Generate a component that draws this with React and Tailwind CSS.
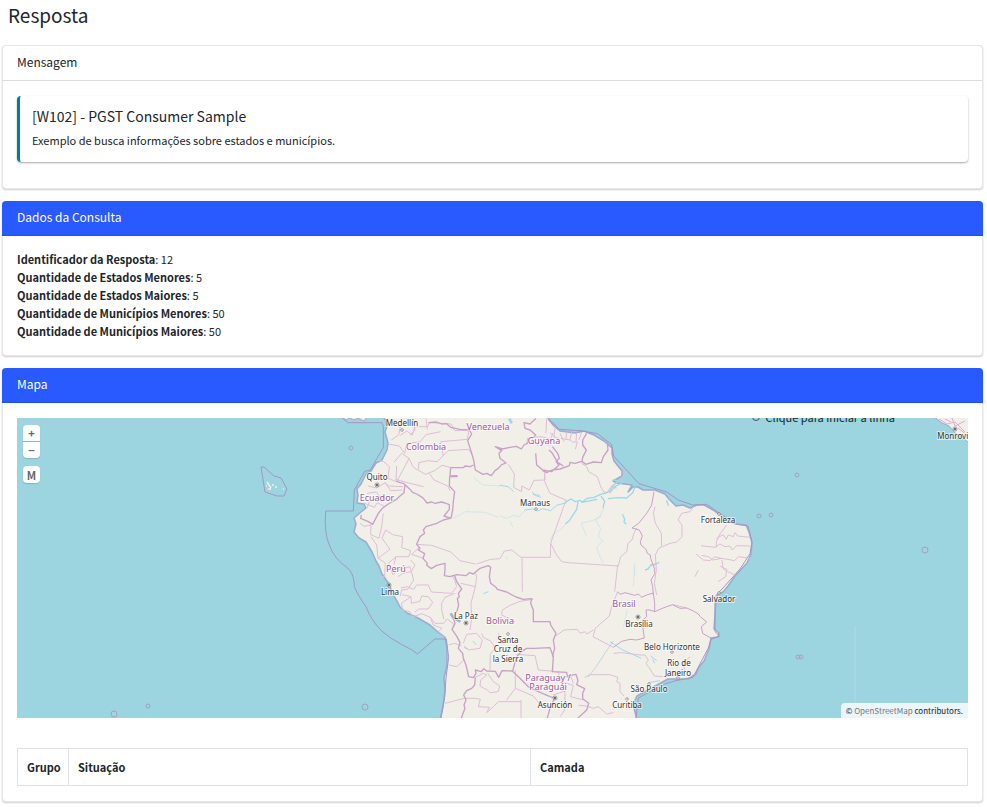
import { useState } from 'react';
import clsx from 'clsx';

// --- Data ---
const consulta = [
  { label: 'Identificador da Resposta', value: 12 },
  { label: 'Quantidade de Estados Menores', value: 5 },
  { label: 'Quantidade de Estados Maiores', value: 5 },
  { label: 'Quantidade de Municípios Menores', value: 50 },
  { label: 'Quantidade de Municípios Maiores', value: 50 },
];

const countries = [
  { x: 471, y: 12, name: 'Venezuela' },
  { x: 409, y: 32, name: 'Colombia' },
  { x: 527, y: 26, name: 'Guyana' },
  { x: 360, y: 83, name: 'Ecuador' },
  { x: 379, y: 154, name: 'Perú' },
  { x: 483, y: 206, name: 'Bolivia' },
  { x: 607, y: 189, name: 'Brasil' },
  { x: 531, y: 263, name: 'Paraguay /' },
  { x: 531, y: 272, name: 'Paraguái' },
];

const cities = [
  { x: 385, y: 8, name: 'Medellín', dot: [385, 12] },
  { x: 360, y: 62, name: 'Quito', dot: [360, 67], capital: true },
  { x: 518, y: 88, name: 'Manaus', dot: [519, 91] },
  { x: 701, y: 105, name: 'Fortaleza', dot: [702, 96] },
  { x: 373, y: 177, name: 'Lima', dot: [372, 167], capital: true },
  { x: 449, y: 201, name: 'La Paz', dot: [449, 205], capital: true },
  { x: 491, y: 225, name: 'Santa', dot: [491, 216] },
  { x: 491, y: 234, name: 'Cruz de' },
  { x: 491, y: 244, name: 'la Sierra' },
  { x: 702, y: 184, name: 'Salvador', dot: [702, 175] },
  { x: 622, y: 209, name: 'Brasília', dot: [621, 199], capital: true },
  { x: 655, y: 232, name: 'Belo Horizonte', dot: [655, 234] },
  { x: 662, y: 248, name: 'Rio de' },
  { x: 661, y: 258, name: 'Janeiro', dot: [661, 260] },
  { x: 632, y: 274, name: 'São Paulo', dot: [632, 266] },
  { x: 610, y: 290, name: 'Curitiba', dot: [610, 281] },
  { x: 538, y: 290, name: 'Asunción', dot: [538, 280], capital: true },
  { x: 938, y: 21, name: 'Monrovia', dot: [938, 11], capital: true },
];

const islands = [
  [334, 30, 2], [780, 57, 2], [742, 98, 2], [754, 97, 2], [908, 132, 3],
  [781, 239, 2], [784, 239, 2], [97, 296, 3], [131, 288, 2], [348, 289, 3],
];

// --- Helper Components ---
const Card = ({ title, primary = false, className = '', children }) => (
  <section className={clsx('rounded border border-gray-200 bg-white shadow-[0_1px_2px_rgba(0,0,0,0.2)]', className)}>
    <h2
      className={clsx(
        '-mx-px -mt-px rounded-t text-xs leading-8',
        primary
          ? 'h-[35px] border-b border-[#244fe5] bg-[#295aff] px-[15px] text-white'
          : 'h-9 border border-gray-200 border-b-[#dcdcdc] px-[14px]'
      )}
    >
      {title}
    </h2>
    {children}
  </section>
);

const MapDrawing = () => (
  <svg
    className="block h-full w-full"
    viewBox="0 0 951 300"
    preserveAspectRatio="xMidYMid slice"
    role="img"
    aria-label="Mapa da América do Sul"
    fill="none"
  >
    <rect width="951" height="300" fill="#9cd4df" />

    {/* land */}
    <path
      transform="translate(-17 -418)"
      fill="#f2efe9"
      stroke="#9dabce"
      strokeWidth="1.5"
      strokeLinejoin="round"
      d="M384 416 387 426 385 432 388 443 387 450 382 460 376 463 371 471 366 474 361 484 357 489 358 495 357 503 364 504 366 508 361 512 354 518 356 524 354 532 359 538 366 542 372 552 376 561 379 566 382 574 389 584 393 594 397 601 400 607 407 613 418 618 430 625 438 632 445 637 447 648 447 665 444 678 445 690 443 706 440 720 637 720 633 704 637 696 648 690 657 685 668 679 688 679 696 674 699 667 704 661 709 649 711 638 718 637 719 633 714 629 715 615 716 600 718 594 723 592 728 586 735 576 747 563 751 554 752 543 749 532 746 525 736 524 727 521 720 515 713 510 704 505 697 505 690 508 683 505 676 506 669 499 665 494 655 490 643 490 638 487 633 487 628 492 632 485 617 483 613 481 622 476 622 471 614 461 612 454 612 448 604 441 594 435 584 431 575 433 560 431 554 426 549 420 547 416Z"
    />
    <path
      fill="#f2efe9"
      stroke="#9da9cc"
      d="M917-1 925 5 932 8 938 15 944 18 952 25V-1ZM325-1 329 2 333 0 337 2 341 0 347 3 350-1Z"
    />

    {/* maritime limits */}
    <g transform="translate(303 -8) scale(.33333)" stroke="#a596c4" strokeWidth="3" strokeLinejoin="round">
      <path d="M62 20 83 38H186L190 48V112L151 180 134 184 103 240 100 303H17Q12 370 28 405 43 448 83 474L90 482Q103 500 103 530 113 555 138 590 153 630 184 662 208 684 244 703L278 721 292 732 345 687H379L386 742 378 804 374 863 363 924" />
      <path d="M685 24 718 58 780 62 833 71 875 104 881 138 957 221 1040 246 1075 270 1118 285 1160 283 1202 312 1252 343 1284 348 1296 395 1290 431 1260 477 1216 526 1185 560V665L1199 678 1173 688 1165 714 1143 756 1119 802 1068 812 1034 822 955 864 948 924" />
    </g>

    {/* Amazon basin */}
    <g transform="translate(483 42) scale(.33333)" stroke="#9cd9e5" strokeLinejoin="round" strokeLinecap="round">
      <path d="M200 124 213 117 226 125 240 121 246 127 262 115 282 112 300 104 322 98 335 80 350 68 364 56M246 127 290 118M330 98 345 80 370 66M405 82 398 98 380 114 352 113 325 116M335 78 348 84M340 60 372 66" strokeWidth="4" />
      <path d="M0 76 25 80 40 94M75 150 98 147 112 153 128 146 152 152 170 136 200 128M97 97 110 108 122 112M100 104 118 106" strokeWidth="3" />
      <path d="M234 126 230 148 208 182 198 190M304 110 314 124 309 142M368 164 374 178 372 186 378 192M500 122 505 136" strokeWidth="4" />
      <path d="M0 168 20 175 40 166 58 170 75 150M208 182 180 210 160 222 150 240M312 142 300 170 286 180 302 205 295 230 308 242 290 262 300 290 310 310M302 168 278 182 244 190 258 225M403 320V345M30 185 38 200M18 290 22 296" strokeWidth="2" opacity=".6" />
    </g>

    {/* other rivers and lakes */}
    <g transform="translate(303 -8) scale(.33333)" stroke="#9cd9e5" strokeWidth="3" strokeLinejoin="round">
      <path d="M568 26 575 40" strokeWidth="8" />
      <path d="M460 202 488 225 540 228M400 325 437 305 495 307 535 322" strokeWidth="2" opacity=".6" />
      <path d="M975 480 984 477 992 466 1008 462 1018 457" strokeWidth="4" />
      <path d="M490 551 505 545M433 713 444 716M458 693 469 704M870 695 905 718 964 745M992 738 1010 752M998 748 1004 760M985 818 1020 812M650 96 654 108" strokeWidth="3" />
      <path d="M392 610 400 623 421 635" stroke="#91b8db" strokeWidth="8" />
      <path d="M880 693 860 722 827 772 804 802" strokeWidth="2" stroke="#a6cadc" />
      <path d="M945 460 940 530M922 600 910 650" strokeWidth="2" stroke="#c5e2e6" />
    </g>

    {/* state borders */}
    <g transform="translate(303 -8) scale(.33333)" stroke="#dcbfd6" strokeWidth="3" strokeLinejoin="round">
      <path d="M205 45 225 30 241 50 236 75 214 90M241 76 260 63 277 75 285 50 322 50 330 38 393 42 405 62 447 60 442 88 420 90 362 95 370 138M204 102 238 108 254 130 260 100 300 96 318 74 362 65M170 150 191 155 208 170 204 205 230 215 249 180 267 145 280 172 316 193 342 183 366 166 391 172M230 168 228 210M267 145 245 130 222 157M296 178V158L324 152 352 155 384 122 446 118 457 135M342 210 328 190M342 210 383 228 390 242M227 208 270 220 311 230M280 25 285 60 270 76M318 25 322 58" />
      <path d="M144 228 170 234 195 218 212 242 247 240M195 218 206 228 249 230M141 250 169 246 182 263 205 270M134 280 163 292 172 278 195 290M149 274 141 294M120 340 132 349 153 345 152 374 177 385 185 350 190 310M153 380 170 405 174 445 210 418 186 385 197 360 218 374 248 380 245 413 272 422 267 440 228 440 222 463M174 445 196 458 194 500 180 500M228 440 205 460 219 494 240 478 270 470 281 510 263 538 245 540 240 560M300 410 275 433 310 445" />
      <path d="M290 403 335 406 392 426 420 452 467 462M565 163 583 192 581 232 605 245 605 228 628 240 642 211 675 210 673 188M674 188V215L690 250 738 270M470 462 505 450 514 448 540 446 553 423 575 420 600 440 606 442 607 545M606 442H691L692 400 738 270M692 400 708 432 725 455 745 458 895 468 902 440 920 425 924 400 936 390 942 370 950 354M785 160 800 170 806 185 832 200 842 230 852 247 870 246 880 225 904 205 921 183M1121 290 1110 305 1085 310 1074 330 1086 345V380L1070 396 1050 400 1016 415 1006 435 1009 480M1005 290 1000 310 1006 340 1024 370 1025 410M1189 412 1189 395 1200 372 1220 345M1189 385 1210 374 1218 388 1225 375 1240 380 1245 368 1253 378 1290 382M1143 407 1185 412 1200 402 1215 410 1229 408 1237 420 1250 407 1291 408M1145 436 1165 440 1178 450 1206 445 1244 452 1255 440 1290 445M1206 450 1209 475 1224 485M1128 432 1150 450 1170 452 1185 440 1207 446" />
      <path d="M234 500 248 490 274 485 285 465 272 450M243 534 260 530 281 538 290 525 325 525 334 546 395 550 410 530 404 510 395 495M246 554 273 560 274 580 300 574 305 558 325 560 338 577 325 597 296 597 285 606M273 560 244 580 248 600 270 605 278 621 305 611 331 622 345 640 371 640 382 627 404 645M331 622 340 645 366 655M372 628 365 600 365 580 375 562 405 550M366 655 356 665 376 681M422 520 445 525 466 530 470 500 467 490M466 530 453 580 455 625 450 660M640 568 600 574 570 586 547 600 545 615 565 625 585 635M430 700 440 673 470 670 487 690 480 715 445 720 432 708M485 670 490 682 513 694 526 715 511 733 510 780M535 670 545 700M386 705 404 700 424 707M386 765 410 770 432 750M590 733 645 737 655 780 704 784M466 802 490 790 500 795 482 810 480 828 502 840 510 848 535 845 539 828 520 815 503 790M586 780V835M603 870V924M500 908 520 890 535 875 603 875M586 835 560 870M586 835 640 858 660 882 690 890M375 880 433 865 465 865 481 868 475 890 508 892 500 908" />
      <path d="M893 465 884 545M1009 480 1003 520 1010 555M990 465 1010 462M1200 468 1220 478 1217 500 1194 515M1224 485 1245 495M893 545 875 590 868 618 826 655 819 680 880 712M707 678 732 660 772 658 780 670 795 665 800 672 820 660M794 802 810 794 870 794 894 802 890 815 900 820 900 845 912 858M880 730 905 728 960 735 975 735 985 750 978 760 992 780 1003 798 1031 800 1062 795 1095 782 1090 765 1100 750 1110 740M776 886 800 888 820 895 835 890 860 912 880 908M714 785 724 815 760 826 752 860 790 870M699 855 715 850 735 843 734 900 720 920M734 800 754 802 760 820M1125 500 1135 480M1058 584 1100 594" />
      <path d="M720 70 732 95M705 55 702 82 718 85M690 68 703 80M740 65 738 88M755 66 750 90M770 68 768 94M785 66 777 90M630 105 640 82 665 80 692 88 698 69M722 85 750 90 758 96 772 96 766 118M680 25 678 70" />
    </g>

    {/* country borders */}
    <g transform="translate(303 -8) scale(.33333)" stroke="#c8a1c6" strokeWidth="4" strokeLinejoin="round">
      <path d="M325 38 350 36 365 42 380 41 392 52 420 58 448 60M448 60 455 72 443 92 452 120 461 150 466 180 489 193 500 190 514 197 525 182 535 175 545 164 558 159 540 145 537 130 545 122 526 110 547 117 570 112 589 109 604 117 612 105 622 100 623 86 640 82 647 75 630 60 615 55 612 38 630 42 648 25" />
      <path d="M461 165 450 170 435 168 430 173 392 173 390 198 411 197V200H389L388 228 404 245 400 275 398 300 393 325M393 325 372 318 388 298V284L375 279 364 276 345 280 335 276 321 279 310 265 303 260 290 252 278 247 268 236 250 220 240 218 228 213M255 224 252 248 240 258 228 269 205 282 187 295 175 310 170 320 158 343 145 335 122 325 124 315" />
      <path d="M390 325 370 330 350 340 318 350 310 360 314 370 300 380 294 393 290 403 300 415 295 420 314 431 309 445 322 460 320 466 334 476 350 466 375 460V480L373 497 390 500 410 494 438 497 448 488 460 492 480 475 505 467 512 472 508 500 512 520 528 532 532 538 560 546 588 561 610 568 635 566 632 580 640 600 640 635H690L692 645 708 670 700 690 704 715 697 740" />
      <path d="M404 497 410 515 425 537 415 550 418 560 412 566 416 585 412 600 400 625 405 640 396 658 411 680 420 698 415 715 428 730 430 745 438 765 446 800 460 803 468 790 466 780 484 785 491 776 500 783 526 784 536 802 546 782 577 783M577 783 580 776 590 740 604 725 620 715 642 715 690 713 700 740 697 785 740 787 742 798 768 793 774 812 770 824 794 836 788 850 788 866 806 880 800 900 774 924M577 783 600 805 625 830 655 845 690 860 704 864 690 895 682 924M466 802 464 825 455 835 440 842 431 855 438 870 432 885 435 895 424 924" />
      <path d="M647 130 650 165 668 180 695 185 717 165 708 155 718 145 713 130 697 110M668 182 680 188 696 180 720 177 748 167 750 157 765 160 785 154 797 163 820 156 844 158 850 140 864 120 862 98M687 120 697 130 713 157 730 168M797 163 786 154 788 142 799 120 788 105V90L800 70" />
      <path d="M1002 245 995 285 980 310 964 330 956 340 936 354 958 360 967 378 961 395 963 405 978 418 982 430 991 435 992 445 1005 480" strokeWidth="3" />
      <path d="M893 545 900 553 915 548 930 552 944 556 955 552 965 562 980 555 1000 549 1004 580 1004 605 1020 598 1040 590 1058 584 1080 595 1100 594 1120 603 1135 612 1141 620 1160 636 1144 650 1148 670 1174 685M1002 480 1005 490 993 510 998 530 1000 555M1004 605 990 600 978 600 980 620 968 630 968 650 973 684 950 690 930 688 905 694 880 712" strokeWidth="3" />
    </g>
    <g stroke="#d7afcf">
      <path d="M922 1 930 6 938 4 948 14M935 0 938 8 948 3M941 10 951 18M928 1 934 4" />
    </g>

    {/* Galápagos */}
    <path d="M244 49 247 49 257 58 264 60 270 71 267 78 260 78 248 74Z" stroke="#a596c4" />
    <path d="M250 64 252 67 254 70M255 67h2M249 68h1M258 69h2M266 71h1M251 71h3" stroke="#f2efe9" strokeWidth="1.5" />

    <g stroke="#a3a0c6">
      {islands.map(([x, y, r]) => (
        <circle key={`${x}-${y}`} cx={x} cy={y} r={r} />
      ))}
    </g>
    <path d="M838 208V285" stroke="#acdce7" />

    {/* place names */}
    {cities.filter((c) => c.dot).map((c) => (
      <g key={c.name} stroke="#777" strokeWidth=".7">
        <circle cx={c.dot[0]} cy={c.dot[1]} r={c.capital ? 2 : 1.3} fill="#fff" />
        {c.capital && <circle cx={c.dot[0]} cy={c.dot[1]} r=".8" fill="#444" stroke="#444" />}
      </g>
    ))}
    <g
      className="font-['Noto_Sans',sans-serif] text-[8px]"
      textAnchor="middle"
      fill="#333"
      stroke="#ffffff99"
      strokeWidth="2"
      paintOrder="stroke"
    >
      {cities.map((c) => (
        <text key={c.name} x={c.x} y={c.y}>{c.name}</text>
      ))}
    </g>
    <g
      className="font-['Noto_Sans',sans-serif] text-[9px]"
      textAnchor="middle"
      fill="#9a5c9b"
      stroke="#ffffff99"
      strokeWidth="2"
      paintOrder="stroke"
    >
      {countries.map((c) => (
        <text key={c.name} x={c.x} y={c.y}>{c.name}</text>
      ))}
    </g>
  </svg>
);

const MapButton = ({ label, className = '', onClick, children }) => (
  <button
    type="button"
    aria-label={label}
    onClick={onClick}
    className={clsx('flex w-[17px] items-center justify-center bg-white text-[11px] font-bold text-[#666] shadow-[0_1px_1px_rgba(0,0,0,0.15)]', className)}
  >
    {children}
  </button>
);

function App() {
  const [drawing, setDrawing] = useState(false);

  return (
    <main className="pr-1 pb-1 pl-0.5 font-['Noto_Sans_CJK_SC',sans-serif] text-[11px] leading-[18px] text-[#212529]">
      <h1 className="mb-[15px] ml-1.5 h-[30px] text-[19px] leading-[30px]">Resposta</h1>

      <Card title="Mensagem" className="mb-3">
        <div className="px-[14px] pt-[15px] pb-[26px]">
          <div className="rounded-sm border-l-[3px] border-[#00808c] px-3 pt-[11px] pb-[13px] shadow-[0_1px_2px_rgba(0,0,0,0.35)]">
            <h3 className="mb-1.5 text-sm leading-[18px]">[W102] - PGST Consumer Sample</h3>
            <p>Exemplo de busca informações sobre estados e municípios.</p>
          </div>
        </div>
      </Card>

      <Card title="Dados da Consulta" primary className="mb-3">
        <div className="px-[14px] pt-[14px] pb-[15px]">
          {consulta.map((item) => (
            <p key={item.label}>
              <strong className="font-bold">{item.label}</strong>: {item.value}
            </p>
          ))}
        </div>
      </Card>

      <Card title="Mapa" primary>
        <div className="px-[14px] pt-[15px] pb-[15px]">
          <div className="relative mb-[30px] h-[300px] overflow-hidden">
            <MapDrawing />

            <div className="absolute top-[7px] left-1.5">
              <MapButton label="Aproximar" className="mb-px h-4 rounded-t-sm">+</MapButton>
              <MapButton label="Afastar" className="mb-2 h-4 rounded-b-sm">−</MapButton>
              <MapButton label="Medir" className="h-[17px] rounded-sm" onClick={() => setDrawing(!drawing)}>M</MapButton>
            </div>

            <label className="absolute -top-[10px] right-[73px] flex items-center gap-1.5">
              <input
                type="radio"
                checked={drawing}
                onChange={() => setDrawing(true)}
                className="size-2 appearance-none rounded-full border border-gray-600"
              />
              Clique para iniciar a linha
            </label>

            <p className="absolute right-0 bottom-0 rounded-tl-sm bg-white/80 px-[5px] text-[8px] leading-[15px]">
              © <a href="https://www.openstreetmap.org/copyright" className="text-[#777]">OpenStreetMap</a> contributors.
            </p>
          </div>

          <table className="w-full table-fixed border-collapse text-left">
            <thead>
              <tr>
                <th className="w-[51px] border border-[#dee2e6] px-[9px] py-[9px] font-bold">Grupo</th>
                <th className="border border-[#dee2e6] px-[9px] py-[9px] font-bold">Situação</th>
                <th className="w-[46%] border border-[#dee2e6] px-[9px] py-[9px] font-bold">Camada</th>
              </tr>
            </thead>
          </table>
        </div>
      </Card>
    </main>
  );
}

export default App;
